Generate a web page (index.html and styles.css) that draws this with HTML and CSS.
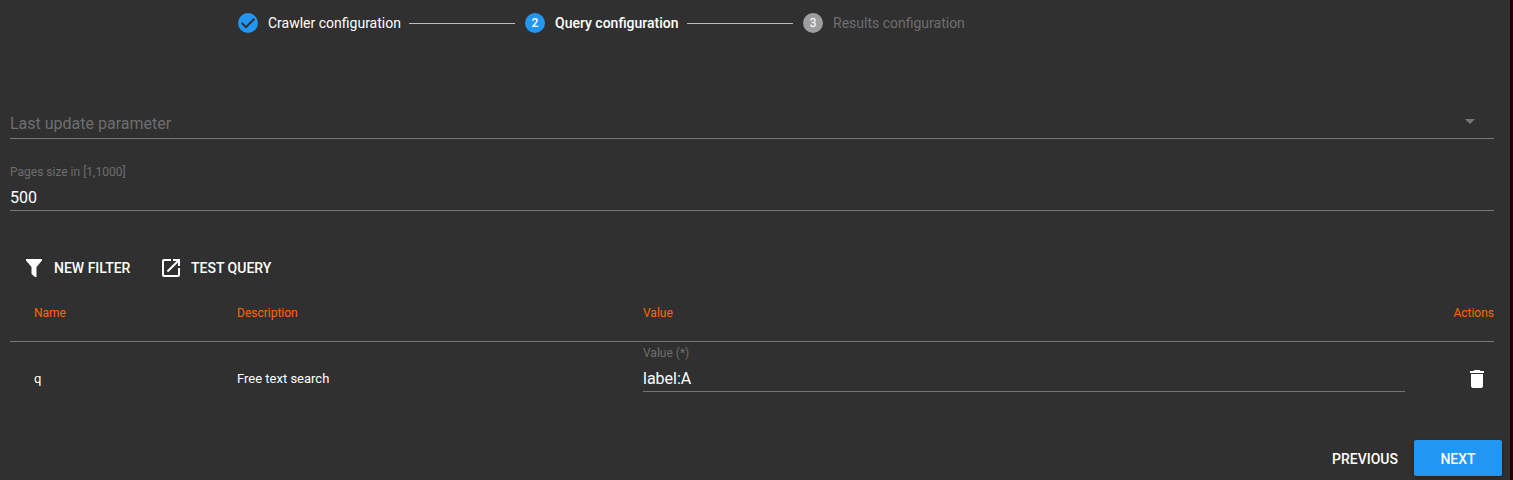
FILE: index.html
```html
<!DOCTYPE html>
<html lang="en">
<head>
<meta charset="utf-8">
<title>Query configuration</title>
<link rel="stylesheet" href="styles.css">
</head>
<body>
<main class="dialog">
  <nav class="steps">
    <div class="step first">
      <svg class="check" viewBox="0 0 20 20"><circle cx="10" cy="10" r="10" fill="#2196f3"/><path d="M3.700 9.900l4.300 4.300 8.400-8.400" fill="none" stroke="#303030" stroke-width="2"/></svg>
      <span class="step-label">Crawler configuration</span>
    </div>
    <span class="line"></span>
    <div class="step second"><span class="dot">2</span><span class="step-label active">Query configuration</span></div>
    <span class="line"></span>
    <div class="step third"><span class="dot off">3</span><span class="step-label disabled">Results configuration</span></div>
  </nav>
  <section class="content">
    <div class="select"><span>Last update parameter</span><svg class="arrow" viewBox="0 0 10 5"><path d="M0 0h10L5 5z" fill="#757575"/></svg></div>
    <div class="field pages"><label>Pages size in [1,1000]</label><div class="input">500</div></div>
    <div class="toolbar">
      <button class="tool new"><svg viewBox="0 0 24 24"><path d="M4 3h16v1.500L14.500 11v10H13l-3.500-3v-7L4 4.500z"/></svg>NEW FILTER</button>
      <button class="tool test"><svg viewBox="0 0 24 24"><path d="M19 19H5V5h7V3H5c-1.110 0-2 .9-2 2v14c0 1.100.89 2 2 2h14c1.100 0 2-.9 2-2v-7h-2v7zM14 3v2h3.590l-9.830 9.830 1.410 1.410L19 6.410V10h2V3h-7z"/></svg>TEST QUERY</button>
    </div>
    <div class="row head"><span>Name</span><span>Description</span><span>Value</span><span class="actions">Actions</span></div>
    <div class="row body">
      <span class="cell">q</span><span class="cell">Free text search</span>
      <div class="field value"><label>Value (*)</label><div class="input">label:A</div></div>
      <span class="trash"><svg viewBox="0 0 24 24"><path d="M6 19c0 1.100.9 2 2 2h8c1.100 0 2-.9 2-2V7H6v12zM19 4h-3.500l-1-1h-5l-1 1H5v2h14V4z"/></svg></span>
    </div>
  </section>
  <footer class="footer"><button class="btn previous">PREVIOUS</button><button class="btn next">NEXT</button></footer>
</main>
</body>
</html>
```
FILE: styles.css
```css
* { box-sizing: border-box; }
body { margin: 0; height: 480px; overflow: hidden; background: #250200; color: #fff; font-family: Roboto, sans-serif; }
button { border: 0; padding: 0; background: none; color: #fff; font: 500 14px/36px Roboto, sans-serif; }
svg { display: block; fill: #fff; flex: none; }
.dialog { width: 1510px; height: 480px; background: #303030; }
.steps { display: flex; align-items: center; height: 46px; padding-left: 238px; font-size: 14px; white-space: nowrap; }
.step { display: flex; align-items: center; gap: 10px; flex: none; }
.first { width: 171px; }
.second { width: 162px; }
.check { width: 20px; height: 20px; }
.dot { width: 20px; height: 20px; border-radius: 50%; background: #2196f3; font-size: 12px; line-height: 20px; text-align: center; font-weight: 500; }
.dot.off { background: #9e9e9e; font-weight: 400; }
.active { font-weight: 500; }
.disabled { color: #6e6e6e; }
.line { width: 106px; height: 1px; margin-right: 10px; margin-top: 1px; background: #bdbdbd; flex: none; }
.content { padding: 62px 16px 0 10px; height: 394px; }
.select { display: flex; justify-content: space-between; height: 31px; border-bottom: 1px solid #757575; color: #6e6e6e; font-size: 16px; line-height: 31px; }
.arrow { width: 10px; height: 5px; margin: 11px 19px 0 0; }
.field { border-bottom: 1px solid #757575; }
.field label { display: block; color: #6e6e6e; font-size: 12px; line-height: 14px; }
.input { font-size: 16px; line-height: 20px; }
.pages { margin-top: 26px; height: 46px; }
.pages .input { margin-top: 9px; }
.toolbar { display: flex; height: 36px; margin-top: 39px; padding-left: 12px; }
.tool { display: flex; align-items: center; gap: 8px; }
.tool svg { width: 24px; height: 24px; }
.new { width: 137px; }
.row { display: grid; grid-template-columns: 203px 406px 762px 89px; padding-left: 24px; }
.head { height: 56px; border-bottom: 1px solid #757575; color: #ff6600; font-size: 12px; line-height: 54px; }
.actions { text-align: right; }
.body { padding-top: 4px; font-size: 13px; }
.cell { line-height: 66px; }
.value { height: 46px; }
.value .input { margin-top: 9px; }
.trash { padding: 21px 0 0 60px; }
.trash svg { width: 24px; height: 24px; }
.footer { display: flex; justify-content: flex-end; gap: 8px; padding-right: 8px; }
.btn { height: 36px; padding-top: 2px; line-height: 34px; }
.previous { width: 82px; }
.next { width: 88px; background: #2196f3; border-radius: 2px; box-shadow: 0 2px 5px rgba(0, 0, 0, .26); }
```
